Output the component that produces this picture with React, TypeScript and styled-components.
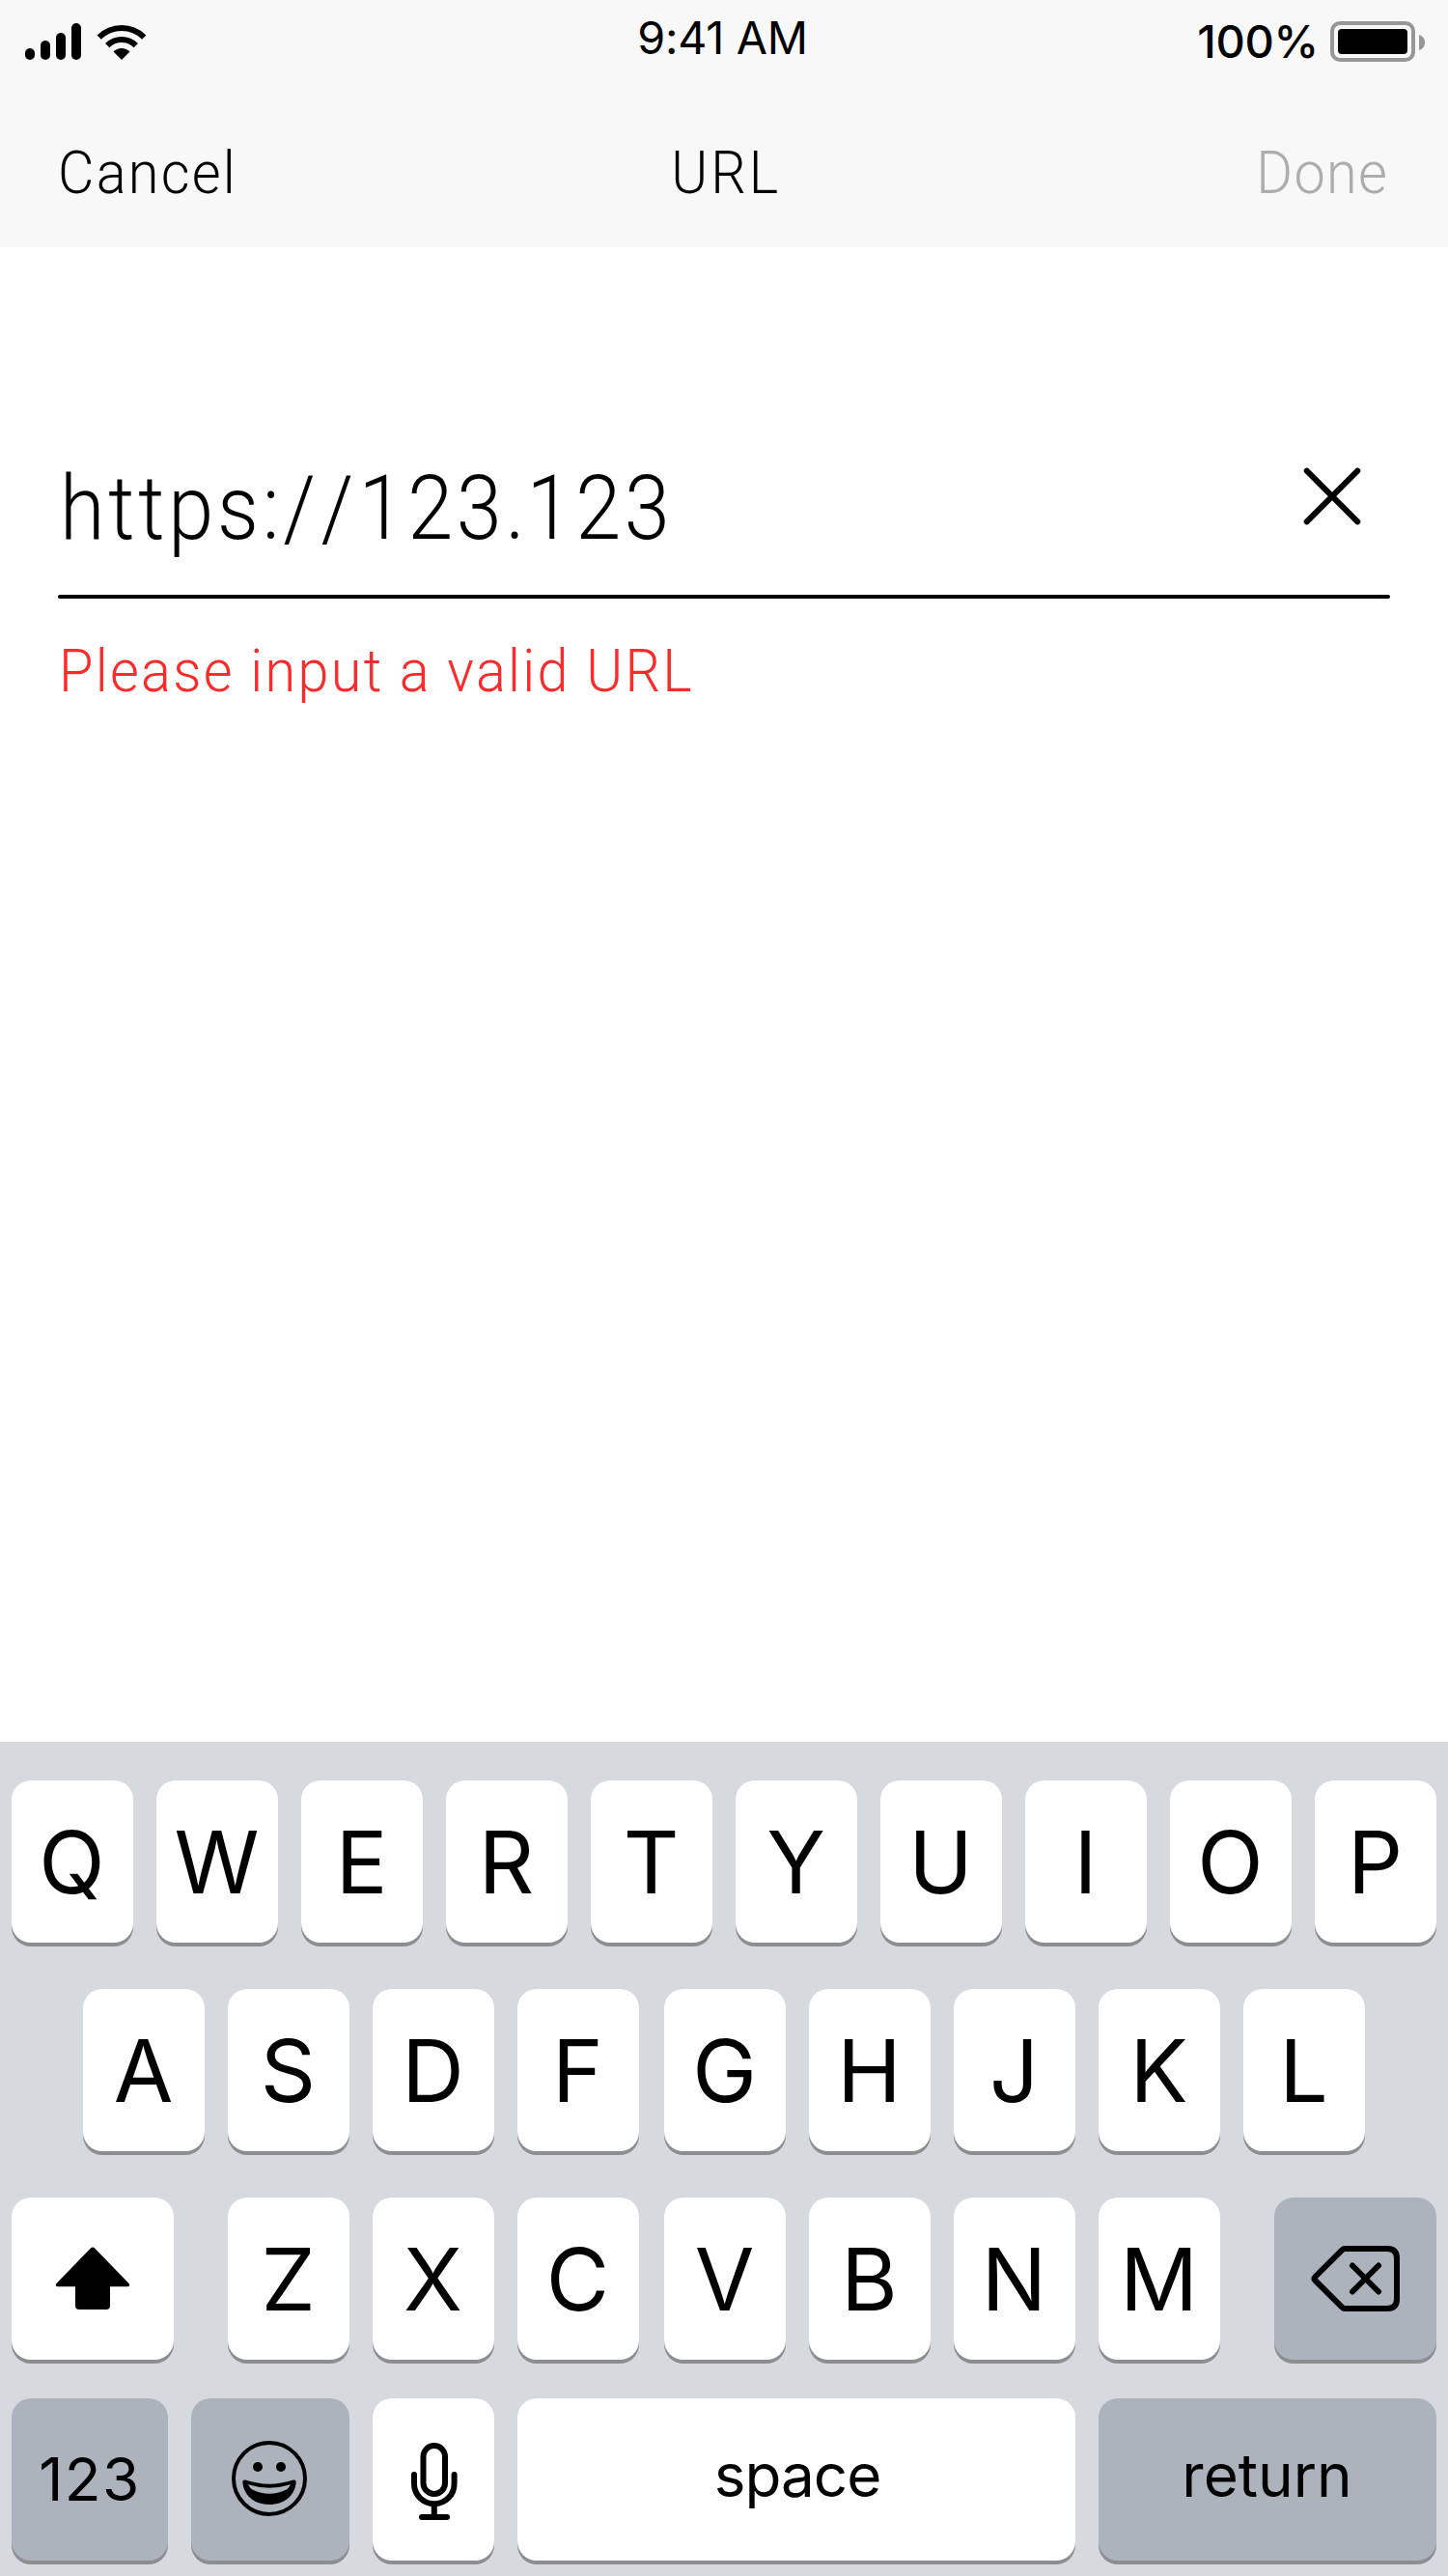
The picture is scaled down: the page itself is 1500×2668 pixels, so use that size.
import React from 'react';
import styled, { createGlobalStyle } from 'styled-components';

const GlobalStyle = createGlobalStyle`
  html, body { margin: 0; padding: 0; background: #fff; }
  *, *::before, *::after { box-sizing: border-box; }
`;

const systemFont = `Inter, 'Liberation Sans', sans-serif`;
const brandFont = `Roboto, 'Liberation Sans', sans-serif`;

const Screen = styled.main`
  display: flex;
  flex-direction: column;
  width: 1500px;
  height: 2668px;
  overflow: hidden;
  background: #fff;
  color: #000;
`;

const Header = styled.header`
  flex: none;
  height: 256px;
  background: #f8f8f8;
`;

const StatusBar = styled.div`
  display: grid;
  grid-template-columns: 1fr auto 1fr;
  align-items: center;
  height: 86px;
  padding: 0 24px 0 26px;
  font-family: ${systemFont};
  line-height: 56px;
`;

const Time = styled.span`
  padding: 0 5px 8px 0;
  font-size: 46.75px;
  letter-spacing: -0.3px;
`;

const Power = styled.div`
  display: flex;
  align-items: center;
  justify-content: flex-end;
  gap: 12px;
`;

const Percent = styled.span`
  font-size: 47px;
  font-weight: 500;
  letter-spacing: -0.3px;
`;

const Icon = styled.svg`
  display: block;
  flex: none;
`;

const NavBar = styled.nav`
  display: grid;
  grid-template-columns: 1fr auto 1fr;
  align-items: center;
  height: 170px;
  padding: 16px 60px 0;
`;

const BrandText = styled.span<{
  $size?: number;
  $spacing?: number;
  $stretch?: number;
  $origin?: string;
  $color?: string;
}>`
  display: inline-block;
  font-family: ${brandFont};
  font-weight: 300;
  font-size: ${(p) => p.$size ?? 62}px;
  line-height: 1.2;
  letter-spacing: ${(p) => p.$spacing ?? 0}px;
  color: ${(p) => p.$color ?? '#000'};
  white-space: pre;
  transform: scaleX(${(p) => p.$stretch ?? 0.93});
  transform-origin: ${(p) => p.$origin ?? 'left'} center;
`;

const NavTitle = styled.div`
  padding-left: 5px;
`;

const NavEnd = styled.div`
  padding-right: 2px;
  text-align: right;
`;

const Content = styled.section`
  flex: 1;
  padding: 180px 60px 0;
`;

const Field = styled.div`
  display: flex;
  align-items: center;
  justify-content: space-between;
  height: 180px;
  padding: 0 30px 0 2px;
`;

const Value = styled.div`
  padding-top: 2px;
  font-kerning: none;
`;

const Piece = styled.span<{ $spacing: number }>`
  letter-spacing: ${(p) => p.$spacing}px;
`;

const ClearButton = styled.div`
  margin-bottom: 24px;
`;

const Underline = styled.div`
  height: 4px;
  border-radius: 2px;
  background: #000;
`;

const ErrorLine = styled.div`
  display: flex;
  margin: 38px 0 0 1px;
`;

const Keyboard = styled.section`
  flex: none;
  height: 864px;
  padding: 40px 12px 0;
  background: #d6d9de;
  font-family: ${systemFont};
`;

const KeyRow = styled.div<{ $inset?: number; $after?: number }>`
  display: flex;
  justify-content: space-between;
  padding: 0 ${(p) => p.$inset ?? 0}px;
  margin-bottom: ${(p) => p.$after ?? 48}px;
`;

const KeyGroup = styled.div`
  display: flex;
  gap: 24px;
`;

const MiddleKeys = styled.div`
  display: flex;
  gap: 26px;
`;

const Key = styled.div<{ $width?: number; $dark?: boolean }>`
  display: flex;
  align-items: center;
  justify-content: center;
  width: ${(p) => p.$width ?? 126}px;
  height: 168px;
  border-radius: 20px;
  background: ${(p) => (p.$dark ? '#adb3bd' : '#fff')};
  box-shadow: 0 4px 0 #8d8e92;
`;

const Letter = styled.span`
  padding: 1px 1px 0 0;
  font-size: 89.4px;
  line-height: 108px;
`;

const Caption = styled.span<{ $spacing?: number; $pad?: string }>`
  padding: ${(p) => p.$pad ?? '0'};
  font-size: 62px;
  line-height: 76px;
  letter-spacing: ${(p) => p.$spacing ?? 0}px;
`;

const SignalAndWifi = () => (
  <Icon width="126" height="38" viewBox="0 0 126 38">
    <rect x="0" y="26" width="10" height="12" rx="5" />
    <rect x="16" y="18" width="10" height="20" rx="5" />
    <rect x="32" y="10" width="10" height="28" rx="5" />
    <rect x="48" y="0" width="10" height="38" rx="5" />
    <path d="M76.7 14.7A33 33 0 0 1 123.3 14.7" fill="none" stroke="#000" strokeWidth="6" />
    <path d="M85.2 23.2A21 21 0 0 1 114.8 23.2" fill="none" stroke="#000" strokeWidth="6" />
    <path d="M100 38L91.5 29.5A12 12 0 0 1 108.5 29.5Z" />
  </Icon>
);

const Battery = () => (
  <Icon width="98" height="42" viewBox="0 0 98 42">
    <rect x="2" y="2" width="84" height="38" rx="8" fill="none" stroke="#979797" strokeWidth="4" />
    <rect x="8" y="8" width="72" height="26" rx="4" />
    <path d="M92 14C95.8 15.4 98 18 98 22S95.8 28.6 92 30Z" fill="#979797" />
  </Icon>
);

const Cross = () => (
  <Icon width="60" height="60" viewBox="0 0 60 60">
    <path d="M3.700 3.700L56.300 56.300M56.300 3.700L3.700 56.300" stroke="#000" strokeWidth="6" strokeLinecap="round" />
  </Icon>
);

const Shift = () => (
  <Icon width="168" height="168" viewBox="0 0 168 168">
    <path d="M81.9 52.6Q84 50.5 86.1 52.6L121.3 88.8Q122.8 90.5 121.800 91.800Q121.200 92.200 120 92.200H102V112Q102 116 98 116H70Q66 116 66 112V92.200H48Q46.800 92.200 46.200 91.800Q45.200 90.500 46.700 88.800Z" />
  </Icon>
);

const Backspace = () => (
  <Icon width="168" height="168" viewBox="0 0 168 168" fill="none" stroke="#000" strokeWidth="6">
    <path d="M73.500 53H117Q127 53 127 63V105Q127 115 117 115H73.500Q71.500 115 70.200 113.600L42.500 86Q40.500 84 42.500 82L70.200 54.400Q71.500 53 73.500 53Z" />
    <path d="M81 70.500L108 97.500M108 70.500L81 97.500" strokeLinecap="round" />
  </Icon>
);

const Smiley = () => (
  <Icon width="164" height="168" viewBox="0 0 164 168">
    <circle cx="81" cy="83" r="37" fill="none" stroke="#000" strokeWidth="4" />
    <circle cx="69" cy="71" r="5" />
    <circle cx="93" cy="71" r="5" />
    <path
      fillRule="evenodd"
      d="M56.200 84.500Q81 92.800 105.800 84.500Q108.800 84 108.700 87C107.500 101 96 110 81 110S54.500 101 53.300 87Q53.200 84 56.200 84.500ZM59 89.300Q60.500 92.200 62.500 94Q71 98.800 81 98.800T99.500 94Q101.500 92.200 103 89.300Q81 96.100 59 89.300Z"
    />
  </Icon>
);

const Microphone = () => (
  <Icon width="126" height="168" viewBox="0 0 126 168" fill="none" stroke="#000" strokeWidth="6" strokeLinecap="round">
    <rect x="52.500" y="49" width="22.500" height="50" rx="11.250" />
    <path d="M43 79V88.500A20.800 20.800 0 0 0 84.600 88.500V79M63.800 110V121M51 123H77" />
  </Icon>
);

const LetterKeys = ({ letters }: { letters: string }) => (
  <KeyGroup>
    {letters.split('').map((letter) => (
      <Key key={letter}>
        <Letter>{letter}</Letter>
      </Key>
    ))}
  </KeyGroup>
);

export default function App() {
  return (
    <Screen>
      <GlobalStyle />
      <Header>
        <StatusBar>
          <SignalAndWifi />
          <Time>9:41 AM</Time>
          <Power>
            <Percent>100%</Percent>
            <Battery />
          </Power>
        </StatusBar>
        <NavBar>
          <div>
            <BrandText $spacing={2.4}>Cancel</BrandText>
          </div>
          <NavTitle>
            <BrandText $spacing={3.2} $origin="center">URL</BrandText>
          </NavTitle>
          <NavEnd>
            <BrandText $spacing={1.4} $origin="right" $color="#adadad">Done</BrandText>
          </NavEnd>
        </NavBar>
      </Header>
      <Content>
        <Field>
          <Value>
            <BrandText $size={92} $stretch={0.92}>
              <Piece $spacing={4.1}>https:</Piece>
              <Piece $spacing={6}>//</Piece>
              <Piece $spacing={4}>123</Piece>
              <Piece $spacing={2}>.</Piece>
              <Piece $spacing={4}>123</Piece>
            </BrandText>
          </Value>
          <ClearButton>
            <Cross />
          </ClearButton>
        </Field>
        <Underline />
        <ErrorLine>
          <BrandText $spacing={2.45} $color="#fb2b2b">Please input a valid URL</BrandText>
        </ErrorLine>
      </Content>
      <Keyboard>
        <KeyRow>
          <LetterKeys letters="QWERTYUIOP" />
        </KeyRow>
        <KeyRow $inset={74}>
          <LetterKeys letters="ASDF" />
          <LetterKeys letters="GHJKL" />
        </KeyRow>
        <KeyRow $after={40}>
          <Key $width={168}>
            <Shift />
          </Key>
          <MiddleKeys>
            <LetterKeys letters="ZXC" />
            <LetterKeys letters="VBNM" />
          </MiddleKeys>
          <Key $width={168} $dark>
            <Backspace />
          </Key>
        </KeyRow>
        <KeyRow $after={0}>
          <Key $width={162} $dark>
            <Caption $spacing={1.4}>123</Caption>
          </Key>
          <Key $width={164} $dark>
            <Smiley />
          </Key>
          <Key>
            <Microphone />
          </Key>
          <Key $width={578}>
            <Caption $spacing={-1} $pad="0 0 9px 2px">space</Caption>
          </Key>
          <Key $width={350} $dark>
            <Caption $pad="0 1px 9px 0">return</Caption>
          </Key>
        </KeyRow>
      </Keyboard>
    </Screen>
  );
}
